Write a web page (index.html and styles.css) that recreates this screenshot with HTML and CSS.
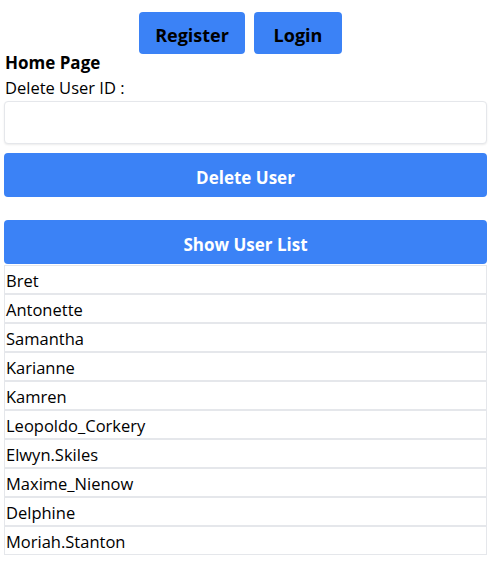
FILE: index.html
```html
<!DOCTYPE html>
<html>
<head>
<meta charset="utf-8">
<link rel="stylesheet" href="styles.css">
</head>
<body>
<div class="page">
  <nav class="nav">
    <button class="nav-btn">Register</button>
    <button class="nav-btn">Login</button>
  </nav>
  <h1 class="title">Home Page</h1>
  <label class="label">Delete User ID :</label>
  <input class="field" type="text">
  <button class="wide-btn delete">Delete User</button>
  <button class="wide-btn show">Show User List</button>
  <ul class="users">
    <li>Bret</li>
    <li>Antonette</li>
    <li>Samantha</li>
    <li>Karianne</li>
    <li>Kamren</li>
    <li>Leopoldo_Corkery</li>
    <li>Elwyn.Skiles</li>
    <li>Maxime_Nienow</li>
    <li>Delphine</li>
    <li>Moriah.Stanton</li>
  </ul>
</div>
</body>
</html>
```
FILE: styles.css
```css
* { box-sizing: border-box; }
html, body { margin: 0; padding: 0; background: #fff; }
body {
  font-family: "Open Sans", "Noto Sans", sans-serif;
  color: #000;
  font-size: 16px;
}
.page {
  display: flex;
  flex-direction: column;
  margin: 0 8px 0 4px;
}
.nav {
  display: flex;
  justify-content: center;
  gap: 9px;
  padding-top: 12px;
  padding-right: 10px;
}
.nav-btn {
  height: 42px;
  background: #3b82f6;
  border: none;
  border-radius: 4px;
  font-family: inherit;
  font-weight: 700;
  font-size: 18px;
  color: #000;
  padding: 3px 16px 0;
}
.nav-btn:first-child { width: 106px; }
.nav-btn:last-child { width: 88px; }
.title {
  margin: 0;
  font-size: 17px;
  font-weight: 700;
  line-height: 18px;
  padding-left: 1px;
}
.label {
  display: block;
  line-height: 22px;
  margin-top: 5px;
  padding-left: 1px;
  font-size: 16.5px;
}
.field {
  display: block;
  width: 100%;
  height: 43px;
  margin-top: 2px;
  border: 1px solid #e5e7eb;
  border-radius: 4px;
  box-shadow: 0 1px 2px rgba(0,0,0,0.08);
  font-family: inherit;
  font-size: 16px;
}
.wide-btn {
  display: block;
  width: 100%;
  height: 44px;
  background: #3b82f6;
  border: none;
  border-radius: 4px;
  color: #fff;
  font-family: inherit;
  font-weight: 700;
  font-size: 17px;
  padding: 4px 0 0;
}
.delete { margin-top: 9px; }
.show { margin-top: 23px; }
.users {
  list-style: none;
  margin: 1px 0 0;
  padding: 0;
}
.users li {
  height: 29px;
  line-height: 24px;
  padding: 3px 0 0 1px;
  border: 1px solid #e5e7eb;
  font-size: 16.5px;
}
```
